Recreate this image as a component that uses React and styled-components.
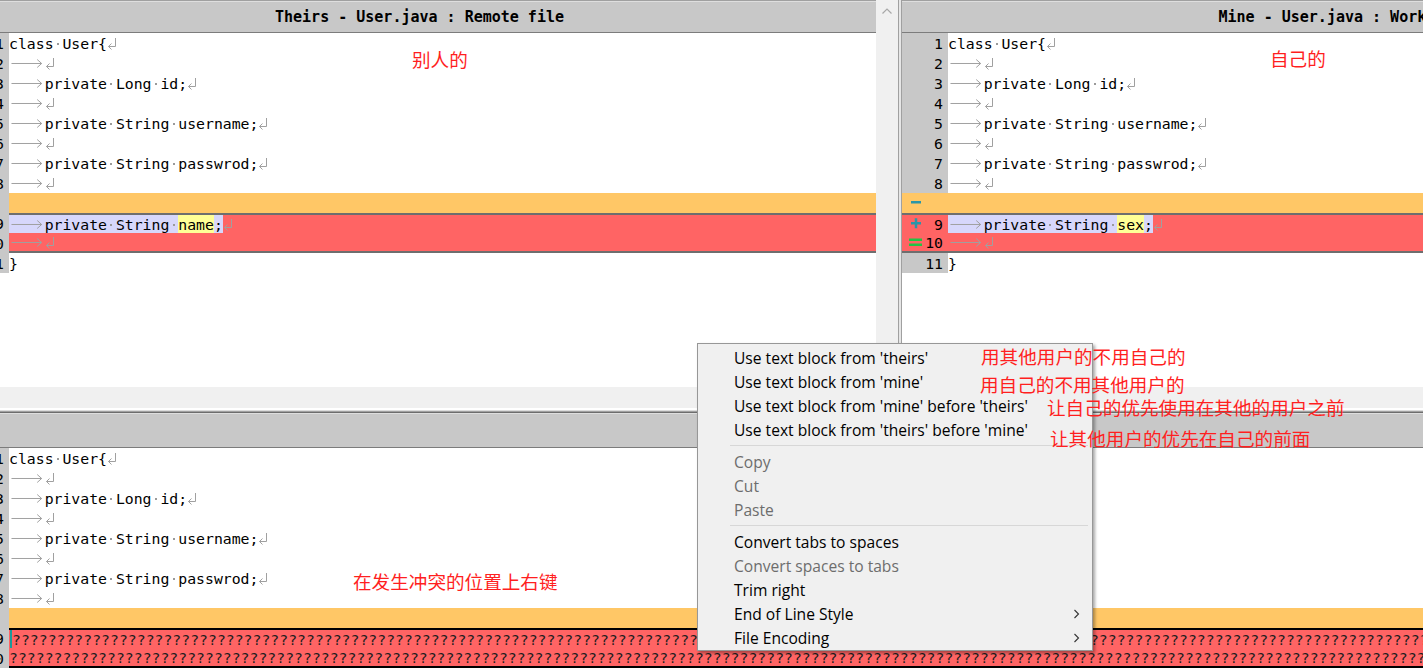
import React from "react";
import styled, { createGlobalStyle, css } from "styled-components";

const MONO = `"DejaVu Sans Mono", "Liberation Mono", monospace`;
const UI = `"Segoe UI", "Open Sans", "Noto Sans", sans-serif`;
const CJK = `"Noto Sans CJK SC", "Noto Sans", sans-serif`;

const ROW_BG = { plain: "#ffffff", gap: "#ffc766", conflict: "#ff6464" };

const GlobalStyle = createGlobalStyle`
  html, body { margin: 0; padding: 0; background: #fff; }
  body { overflow: hidden; }
`;

const Screen = styled.div`
  position: relative;
  width: 1423px;
  height: 671px;
  overflow: hidden;
  background: #fff;
  display: flex;
  flex-direction: column;
`;

const TopSplit = styled.div`
  display: flex;
  height: 387px;
  flex-shrink: 0;
`;

const Viewport = styled.div`
  flex: ${({ $width }) => ($width ? `0 0 ${$width}px` : "1 1 0")};
  min-width: 0;
  overflow: hidden;
  height: 100%;
`;

const Pane = styled.div`
  width: ${({ $width }) => $width}px;
  margin-left: ${({ $shift }) => $shift || 0}px;
  height: 100%;
  display: flex;
  flex-direction: column;
`;

const TitleBar = styled.div`
  height: ${({ $h }) => $h}px;
  flex-shrink: 0;
  border-top: 1px solid ${({ $topLine }) => $topLine || "#a0a0a0"};
  border-bottom: 1px solid #7c7c7c;
  background: #c8c8c8;
  box-shadow: inset 0 1px 0 #dedede;
  display: flex;
  align-items: center;
  justify-content: center;
  font: bold 15px ${MONO};
  color: #000;
  white-space: nowrap;
`;

const CodeArea = styled.div`
  flex: 1;
  background: #fff;
  overflow: hidden;
`;

const ScrollStrip = styled.div`
  flex: 0 0 22px;
  background: #f0f0f0;
  display: flex;
  justify-content: center;
  padding-top: 8px;
  box-sizing: border-box;
`;

const Splitter = styled.div`
  flex: 0 0 2px;
  background: #e6e6e6;
  border-left: 1px solid #a0a0a0;
  border-right: 1px solid #a0a0a0;
`;

const HScroll = styled.div`
  height: 21px;
  flex-shrink: 0;
  background: #f0f0f0;
`;

const Divider = styled.div`
  height: 1px;
  flex-shrink: 0;
  background: #dcdcdc;
  border-top: 2px solid #fff;
  border-bottom: 1px solid #a0a0a0;
`;

const BottomViewport = styled.div`
  flex: 1;
  overflow: hidden;
`;

const band = css`
  box-sizing: border-box;
  border-top: ${({ $edge, $line }) => ($edge === "top" ? `2px solid ${$line}` : "0")};
  border-bottom: ${({ $edge, $line }) => ($edge === "bottom" ? `2px solid ${$line}` : "0")};
`;

const Row = styled.div`
  display: flex;
  height: 20px;
`;

const Gutter = styled.div`
  flex: 0 0 46px;
  display: flex;
  align-items: center;
  justify-content: space-between;
  padding: 0 5px 0 7px;
  font: 14.8px ${MONO};
  color: #000;
  background: ${({ $tint }) => $tint || "#c8c8c8"};
  ${({ $tint }) => ($tint ? band : "box-sizing: border-box;")}
`;

const Code = styled.div`
  flex: 1;
  display: flex;
  align-items: center;
  overflow: hidden;
  white-space: pre;
  font: 14.8px ${MONO};
  color: ${({ $ink }) => $ink || "#000"};
  background: ${({ $bg }) => $bg};
  ${band}
`;

const Sel = styled.span`
  display: inline-flex;
  align-items: center;
  height: 100%;
  background: ${({ $on }) => ($on ? "#d7d7fb" : "transparent")};
`;

const Word = styled.span`
  display: inline-flex;
  align-items: center;
  height: 100%;
  background: #ffff96;
`;

const TabCell = styled.span`
  display: inline-flex;
  width: 4ch;
  height: 20px;
  flex-shrink: 0;
`;

const DotCell = styled.span`
  display: inline-flex;
  width: 1ch;
  height: 20px;
  align-items: center;
  justify-content: center;
  flex-shrink: 0;
  &::before {
    content: "";
    width: 2px;
    height: 2px;
    margin-top: 2px;
    background: #9a9a9a;
  }
`;

const EolCell = styled.span`
  display: inline-flex;
  width: 10px;
  height: 20px;
  flex-shrink: 0;
`;

const Caret = styled.span`
  display: inline-block;
  width: 2px;
  height: 18px;
  background: #1a9a9a;
  margin-left: 1px;
  flex-shrink: 0;
`;

const Menu = styled.div`
  position: absolute;
  left: 697px;
  top: 343px;
  width: 396px;
  box-sizing: border-box;
  padding-top: 2px;
  background: #f0f0f0;
  border: 1px solid #979797;
  box-shadow: 2px 2px 3px rgba(0, 0, 0, 0.35);
  font: 15.6px ${UI};
  z-index: 5;
`;

const MenuItem = styled.div`
  height: 24px;
  display: flex;
  align-items: center;
  justify-content: space-between;
  padding: 0 12px 0 36px;
  color: ${({ $disabled }) => ($disabled ? "#6d6d6d" : "#000")};
  white-space: nowrap;
`;

const MenuSep = styled.div`
  margin: 3px 4px 4px 32px;
  border-top: 1px solid #d7d7d7;
`;

const Note = styled.div`
  position: absolute;
  left: ${({ $x }) => $x}px;
  top: ${({ $y }) => $y}px;
  font: 18.6px/20px ${CJK};
  color: #ff1f1f;
  white-space: nowrap;
  z-index: 10;
`;

const Tab = () => (
  <TabCell>
    <svg width="36" height="20" viewBox="0 0 36 20">
      <path d="M2.5 10.5H33M28.5 6.5L33 10.5L28.5 14.5" fill="none" stroke="#a0a0a0" strokeWidth="1" />
    </svg>
  </TabCell>
);

const Eol = () => (
  <EolCell>
    <svg width="10" height="20" viewBox="0 0 10 20">
      <path d="M8.5 5V13.5H1.5M4.5 10.5L1.5 13.5L4.5 16.5" fill="none" stroke="#a0a0a0" strokeWidth="1" />
    </svg>
  </EolCell>
);

const Marker = ({ type }) => (
  <svg width="14" height="20" viewBox="0 0 14 20">
    {type === "minus" && <rect x="2" y="9" width="10" height="2.5" fill="#2b96a8" />}
    {type === "plus" && (
      <>
        <rect x="2" y="9" width="10" height="2.5" fill="#2b96a8" />
        <rect x="5.75" y="5.25" width="2.5" height="10" fill="#2b96a8" />
      </>
    )}
    {type === "equal" && (
      <>
        <rect x="0" y="7.5" width="13" height="2.5" fill="#22c444" />
        <rect x="0" y="12.5" width="13" height="2.5" fill="#22c444" />
      </>
    )}
  </svg>
);

const ChevronUp = () => (
  <svg width="10" height="6" viewBox="0 0 10 6">
    <path d="M0.5 5.5L5 1L9.5 5.5" fill="none" stroke="#a8a8a8" strokeWidth="1.2" />
  </svg>
);

const ChevronRight = () => (
  <svg width="7" height="10" viewBox="0 0 7 10">
    <path d="M1.5 1L5.5 5L1.5 9" fill="none" stroke="#333" strokeWidth="1.1" />
  </svg>
);

function renderText(text, word) {
  const out = [];
  let buf = "";
  const flush = () => {
    if (!buf) return;
    if (word && buf.startsWith(word)) {
      out.push(<Word key={out.length}>{word}</Word>);
      buf = buf.slice(word.length);
    }
    if (buf) out.push(buf);
    buf = "";
  };
  for (const ch of text) {
    if (ch === "\t") {
      flush();
      out.push(<Tab key={out.length} />);
    } else if (ch === " ") {
      flush();
      out.push(<DotCell key={out.length} />);
    } else {
      buf += ch;
    }
  }
  flush();
  return out;
}

const base = [
  { n: 1, text: "class User{" },
  { n: 2, text: "\t" },
  { n: 3, text: "\tprivate Long id;" },
  { n: 4, text: "\t" },
  { n: 5, text: "\tprivate String username;" },
  { n: 6, text: "\t" },
  { n: 7, text: "\tprivate String passwrod;" },
  { n: 8, text: "\t" },
];

const theirs = [
  ...base,
  { kind: "gap" },
  { n: 9, text: "\tprivate String name;", kind: "conflict", edge: "top", sel: true, word: "name" },
  { n: 10, text: "\t", kind: "conflict", edge: "bottom" },
  { n: 11, text: "}", noEol: true },
];

const mine = [
  ...base,
  { kind: "gap", mark: "minus" },
  { n: 9, text: "\tprivate String sex;", kind: "conflict", edge: "top", sel: true, word: "sex", mark: "plus" },
  { n: 10, text: "\t", kind: "conflict", edge: "bottom", mark: "equal" },
  { n: 11, text: "}", noEol: true },
];

const QS = "?".repeat(172);
const merged = [
  ...base,
  { kind: "gap" },
  { n: 9, text: QS, kind: "conflict", edge: "top", noEol: true, caret: true, ink: "#1e1e1e" },
  { n: 10, text: QS, kind: "conflict", edge: "bottom", noEol: true, ink: "#1e1e1e" },
];

const menuItems = [
  { label: "Use text block from 'theirs'" },
  { label: "Use text block from 'mine'" },
  { label: "Use text block from 'mine' before 'theirs'" },
  { label: "Use text block from 'theirs' before 'mine'" },
  { sep: true },
  { label: "Copy", disabled: true },
  { label: "Cut", disabled: true },
  { label: "Paste", disabled: true },
  { sep: true },
  { label: "Convert tabs to spaces" },
  { label: "Convert spaces to tabs", disabled: true },
  { label: "Trim right" },
  { label: "End of Line Style", sub: true },
  { label: "File Encoding", sub: true },
];

const notes = [
  { x: 412, y: 49, text: "别人的" },
  { x: 1270, y: 48, text: "自己的" },
  { x: 981, y: 346, text: "用其他用户的不用自己的" },
  { x: 980, y: 374, text: "用自己的不用其他用户的" },
  { x: 1047, y: 397, text: "让自己的优先使用在其他的用户之前" },
  { x: 1050, y: 428, text: "让其他用户的优先在自己的前面" },
  { x: 353, y: 571, text: "在发生冲突的位置上右键" },
];

function CodeView({ lines, tintGutter, edgeColor }) {
  return (
    <CodeArea>
      {lines.map((line, i) => {
        const kind = line.kind || "plain";
        const bg = ROW_BG[kind];
        return (
          <Row key={i}>
            <Gutter
              $tint={tintGutter && kind !== "plain" ? bg : null}
              $edge={line.edge}
              $line={edgeColor}
            >
              <span>{line.mark ? <Marker type={line.mark} /> : null}</span>
              <span>{line.n || ""}</span>
            </Gutter>
            <Code $bg={bg} $edge={line.edge} $line={edgeColor} $ink={line.ink}>
              {line.caret && <Caret />}
              {line.text !== undefined && (
                <Sel $on={line.sel}>{renderText(line.text, line.word)}</Sel>
              )}
              {line.text !== undefined && !line.noEol && <Eol />}
            </Code>
          </Row>
        );
      })}
    </CodeArea>
  );
}

export default function App() {
  return (
    <Screen>
      <GlobalStyle />
      <TopSplit>
        <Viewport $width={876}>
          <Pane $width={913} $shift={-37}>
            <TitleBar $h={31}>Theirs - User.java : Remote file</TitleBar>
            <CodeView lines={theirs} edgeColor="#6e6e6e" />
          </Pane>
        </Viewport>
        <ScrollStrip>
          <ChevronUp />
        </ScrollStrip>
        <Splitter />
        <Viewport>
          <Pane $width={913}>
            <TitleBar $h={31}>Mine - User.java : Working file</TitleBar>
            <CodeView lines={mine} tintGutter edgeColor="#6e6e6e" />
          </Pane>
        </Viewport>
      </TopSplit>
      <HScroll />
      <Divider />
      <BottomViewport>
        <Pane $width={1460} $shift={-37}>
          <TitleBar $h={34} $topLine="#6d6d6d" />
          <CodeView lines={merged} edgeColor="#000" />
        </Pane>
      </BottomViewport>

      <Menu>
        {menuItems.map((item, i) =>
          item.sep ? (
            <MenuSep key={i} />
          ) : (
            <MenuItem key={i} $disabled={item.disabled}>
              <span>{item.label}</span>
              {item.sub && <ChevronRight />}
            </MenuItem>
          )
        )}
      </Menu>

      {notes.map((n, i) => (
        <Note key={i} $x={n.x} $y={n.y}>
          {n.text}
        </Note>
      ))}
    </Screen>
  );
}
